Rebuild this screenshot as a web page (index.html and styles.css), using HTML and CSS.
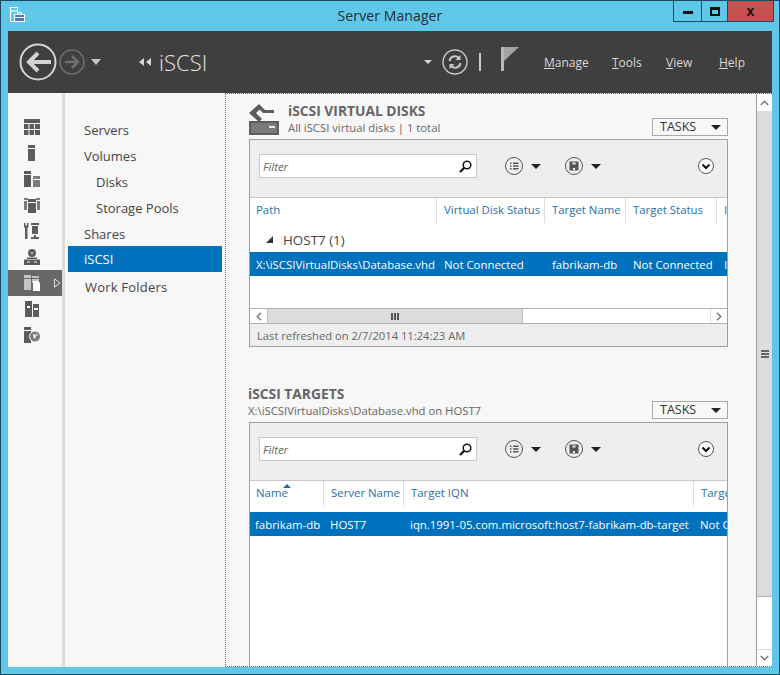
FILE: index.html
```html
<!DOCTYPE html>
<html lang="en">
<head>
  <meta charset="UTF-8" />
  <title>Server Manager</title>
  <link rel="stylesheet" href="styles.css">
</head>
<body>
<div class="window">
  <div class="titlebar">
    <svg class="app-icon" width="18" height="18" viewBox="0 0 18 18" fill="none" stroke="#fff" stroke-width="1">
      <rect x="1.5" y="1.5" width="7" height="14" fill="#5fc8e8"/>
      <path d="M1.5 5h7"/>
      <rect x="5.5" y="8.5" width="10" height="7" fill="#4a7fa8"/>
      <path d="M8.5 8.5v-2h4v2M5.5 11.5h10"/>
    </svg>
    <div class="title">Server Manager</div>
    <div class="controls">
      <div class="ctl ctl-min"><span></span></div>
      <div class="ctl ctl-max"><span></span></div>
      <div class="ctl ctl-close">x</div>
    </div>
  </div>

  <div class="header">
    <svg class="nav-back" width="38" height="38" viewBox="0 0 38 38" fill="none" stroke="#d4d4d4">
      <circle cx="19" cy="19" r="17.5" stroke-width="2"/>
      <path d="M32 19H11" stroke-width="4"/>
      <path d="M19 10l-9 9 9 9" stroke-width="4"/>
    </svg>
    <svg class="nav-forward" width="26" height="26" viewBox="0 0 26 26" fill="none" stroke="#6e6e6e">
      <circle cx="13" cy="13" r="12" stroke-width="1.6"/>
      <path d="M6 13h13M13 7l6 6-6 6" stroke-width="2.6"/>
    </svg>
    <div class="tri-down nav-drop"></div>
    <div class="crumb-arrows"><i></i><i></i></div>
    <div class="crumb">iSCSI</div>
    <div class="tri-small"></div>
    <svg class="refresh" width="26" height="26" viewBox="0 0 26 26" fill="none" stroke="#c8c8c8">
      <circle cx="13" cy="13" r="12" stroke-width="1.4"/>
      <path d="M7.5 12a5.5 5.5 0 0 1 9.5-3M18.500 14a5.500 5.500 0 0 1-9.500 3" stroke-width="2"/>
      <path d="M18.500 6v5h-5zM7.500 20v-5h5z" fill="#c8c8c8" stroke="none"/>
    </svg>
    <div class="sep"></div>
    <svg class="flag" width="18" height="24" viewBox="0 0 18 24">
      <path d="M0 0h3v24H0z" fill="#b8b8b8"/>
      <path d="M3 0h15l-15 14z" fill="#a4a4a4"/>
    </svg>
    <div class="menu">
      <a><u>M</u>anage</a>
      <a><u>T</u>ools</a>
      <a><u>V</u>iew</a>
      <a><u>H</u>elp</a>
    </div>
  </div>

  <div class="body">
    <div class="rail">
      <div class="rail-item">
        <svg width="16" height="16" viewBox="0 0 16 16" fill="#5c5c5c"><path d="M0 0h16v4H0zM0 5h4.500v5H0zM5.500 5h4.500v5H5.500zM11 5h5v5h-5zM0 11h4.500v5H0zM5.500 11h4.500v5H5.500zM11 11h5v5h-5z"/></svg>
      </div>
      <div class="rail-item">
        <svg width="16" height="16" viewBox="0 0 16 16" fill="#5c5c5c"><path d="M4 0h7v3H4zM4 4h7v12H4z"/></svg>
      </div>
      <div class="rail-item">
        <svg width="16" height="16" viewBox="0 0 16 16" fill="#5c5c5c"><path d="M0 0h7v3H0zM0 4h7v12H0z"/><path d="M9 5h7v3H9zM9 9h7v7H9z" fill="#7c7c7c"/></svg>
      </div>
      <div class="rail-item">
        <svg width="16" height="16" viewBox="0 0 16 16" fill="#5c5c5c"><path d="M0 1h4v2H0zM12 1h4v2h-4zM0 4h3v9H0zM13 4h3v9h-3z" fill="#7c7c7c"/><path d="M4 2h8v3H4zM4 6h8v10H4z"/></svg>
      </div>
      <div class="rail-item">
        <svg width="16" height="16" viewBox="0 0 16 16" fill="#5c5c5c"><path d="M0 0l1.500 0v2.500h1.500V0h1.500v4l-1 1v11H1V5L0 4z"/><path d="M7 0h8v2H7zM8 3h6v8H8zM10 12h2v2h3v2H7v-2h3z"/></svg>
      </div>
      <div class="rail-item">
        <svg width="16" height="16" viewBox="0 0 16 16" fill="#5c5c5c"><circle cx="8" cy="4" r="4"/><circle cx="8" cy="4" r="1.500" fill="#9a9a9a"/><path d="M3 8.500h10v1.500H3zM0 10.500h16v5.500H0z"/><path d="M3 12.500h3v1H3zM10 12.500h3v1h-3z" fill="#f7f7f7"/></svg>
      </div>
      <div class="rail-item rail-item-on">
        <svg width="16" height="16" viewBox="0 0 16 16" fill="#c4c4c4"><path d="M0 0h7v3H0zM0 4h7v11H0zM8 1h7v2H8zM8 4h7v4H8z"/><path d="M9 6h5l2 2v8H9z" fill="#fff"/></svg>
        <svg class="rail-arrow" width="7" height="10" viewBox="0 0 7 10" fill="none" stroke="#e4e4e4"><path d="M.5.800L6 5 .5 9.200z"/></svg>
      </div>
      <div class="rail-item">
        <svg width="16" height="16" viewBox="0 0 16 16" fill="#5c5c5c"><path d="M1 0h7v16H1zM9 3h6v13H9z"/><path d="M3 5h3v2H3zM10 7h4v2h-4z" fill="#f7f7f7"/></svg>
      </div>
      <div class="rail-item">
        <svg width="16" height="16" viewBox="0 0 16 16" fill="#5c5c5c"><path d="M0 0h7v3H0zM0 4h7v12H0z"/><circle cx="11" cy="9.500" r="5.500" fill="#7c7c7c" stroke="#f7f7f7"/><path d="M9 7l3 1v2l-2 2zM12 6l2 2-1 1z" fill="#f7f7f7"/></svg>
      </div>
    </div>

    <div class="nav">
      <div class="nav-item">Servers</div>
      <div class="nav-item">Volumes</div>
      <div class="nav-item nav-sub">Disks</div>
      <div class="nav-item nav-sub">Storage Pools</div>
      <div class="nav-item">Shares</div>
      <div class="nav-item nav-on">iSCSI</div>
      <div class="nav-item nav-last">Work Folders</div>
    </div>

    <div class="main">
      <div class="content">

        <div class="section">
          <div class="section-head">
            <svg class="disk-icon" width="32" height="32" viewBox="0 0 32 32" fill="#5c5c5c">
              <path d="M1 18h30v14H1zM3 20v10h26V20z" fill-rule="evenodd"/>
              <path d="M3 20h26v10H3z" fill="#7a7a7a"/>
              <path d="M21 23h6v2h-6z" fill="#e8e8e8"/>
              <path d="M11 1L1 10l10 9 3-3-6-6 3.500-3.500L15 10h11v-3H17z"/>
            </svg>
            <div class="section-text">
              <div class="section-title">iSCSI VIRTUAL DISKS</div>
              <div class="section-sub">All iSCSI virtual disks | 1 total</div>
            </div>
            <div class="tasks">TASKS<span class="tri-down-dark"></span></div>
          </div>

          <div class="panel panel-disks">
            <div class="toolbar">
              <div class="filter"><span>Filter</span>
                <svg width="13" height="13" viewBox="0 0 13 13" fill="none" stroke="#111"><circle cx="8" cy="5" r="3.800" stroke-width="1.500"/><path d="M5.300 7.700L1 12" stroke-width="2.200"/></svg>
              </div>
              <div class="tool tool-list">
                <svg width="18" height="18" viewBox="0 0 18 18" fill="none" stroke="#555"><circle cx="9" cy="9" r="8.500"/><path d="M5 5.500h1.500v1.500H5zM5 8.300h1.500v1.500H5zM5 11h1.500v1.500H5zM8 5.500h5.500v1.500H8zM8 8.300h5.500v1.500H8zM8 11h5.500v1.500H8z" fill="#555" stroke="none"/></svg>
                <span class="tri-down-dark"></span>
              </div>
              <div class="tool tool-save">
                <svg width="18" height="18" viewBox="0 0 18 18" fill="none" stroke="#555"><circle cx="9" cy="9" r="8.500"/><path d="M4.500 4.500h9v9h-9zM7.500 5.500v2h3v-2zM8 11v2h2v-2z" fill="#555" fill-rule="evenodd" stroke="none"/></svg>
                <span class="tri-down-dark"></span>
              </div>
              <svg class="tool-more" width="16" height="16" viewBox="0 0 16 16" fill="#fff" stroke="#555"><circle cx="8" cy="8" r="7.500"/><path d="M4.500 6.500L8 10l3.500-3.500" fill="none" stroke="#111" stroke-width="2"/></svg>
            </div>
            <div class="cols cols-disks thead">
              <div>Path</div><div>Virtual Disk Status</div><div>Target Name</div><div>Target Status</div><div>I</div>
            </div>
            <div class="group"><span class="group-arrow"></span>HOST7 (1)</div>
            <div class="cols cols-disks row-on">
              <div>X:\iSCSIVirtualDisks\Database.vhd</div><div>Not Connected</div><div>fabrikam-db</div><div>Not Connected</div><div>I</div>
            </div>
            <div class="hscroll">
              <div class="hbtn">
                <svg width="6" height="9" viewBox="0 0 6 9" fill="none" stroke="#777" stroke-width="1.400"><path d="M5 .8L1.200 4.500 5 8.200"/></svg>
              </div>
              <div class="hthumb"><i></i><i></i><i></i></div>
              <div class="htrack"></div>
              <div class="hbtn hbtn-end">
                <svg width="6" height="9" viewBox="0 0 6 9" fill="none" stroke="#777" stroke-width="1.400"><path d="M1 .8l3.800 3.700L1 8.200"/></svg>
              </div>
            </div>
            <div class="refreshed">Last refreshed on 2/7/2014 11:24:23 AM</div>
          </div>
        </div>

        <div class="section section-targets">
          <div class="section-head">
            <div class="section-text section-text-plain">
              <div class="section-title">iSCSI TARGETS</div>
              <div class="section-sub">X:\iSCSIVirtualDisks\Database.vhd on HOST7</div>
            </div>
            <div class="tasks">TASKS<span class="tri-down-dark"></span></div>
          </div>

          <div class="panel panel-targets">
            <div class="toolbar">
              <div class="filter"><span>Filter</span>
                <svg width="13" height="13" viewBox="0 0 13 13" fill="none" stroke="#111"><circle cx="8" cy="5" r="3.800" stroke-width="1.500"/><path d="M5.300 7.700L1 12" stroke-width="2.200"/></svg>
              </div>
              <div class="tool tool-list">
                <svg width="18" height="18" viewBox="0 0 18 18" fill="none" stroke="#555"><circle cx="9" cy="9" r="8.500"/><path d="M5 5.500h1.500v1.500H5zM5 8.300h1.500v1.500H5zM5 11h1.500v1.500H5zM8 5.500h5.500v1.500H8zM8 8.300h5.500v1.500H8zM8 11h5.500v1.500H8z" fill="#555" stroke="none"/></svg>
                <span class="tri-down-dark"></span>
              </div>
              <div class="tool tool-save">
                <svg width="18" height="18" viewBox="0 0 18 18" fill="none" stroke="#555"><circle cx="9" cy="9" r="8.500"/><path d="M4.500 4.500h9v9h-9zM7.500 5.500v2h3v-2zM8 11v2h2v-2z" fill="#555" fill-rule="evenodd" stroke="none"/></svg>
                <span class="tri-down-dark"></span>
              </div>
              <svg class="tool-more" width="16" height="16" viewBox="0 0 16 16" fill="#fff" stroke="#555"><circle cx="8" cy="8" r="7.500"/><path d="M4.500 6.500L8 10l3.500-3.500" fill="none" stroke="#111" stroke-width="2"/></svg>
            </div>
            <div class="cols cols-targets thead">
              <div class="sorted">Name</div><div>Server Name</div><div>Target IQN</div><div>Target Status</div>
            </div>
            <div class="cols cols-targets row-on row-targets">
              <div>fabrikam-db</div><div>HOST7</div><div>iqn.1991-05.com.microsoft:host7-fabrikam-db-target</div><div>Not Connected</div>
            </div>
          </div>
        </div>

      </div>

      <div class="vscroll">
        <div class="vbtn">
          <svg width="9" height="6" viewBox="0 0 9 6" fill="none" stroke="#777" stroke-width="1.400"><path d="M.8 5l3.700-3.800L8.200 5"/></svg>
        </div>
        <div class="vthumb"><i></i><i></i><i></i></div>
        <div class="vtrack"></div>
        <div class="vbtn vbtn-end">
          <svg width="9" height="6" viewBox="0 0 9 6" fill="none" stroke="#777" stroke-width="1.400"><path d="M.8 1l3.700 3.800L8.200 1"/></svg>
        </div>
      </div>
    </div>
  </div>
</div>
</body>
</html>
```

FILE: styles.css
```css
* { box-sizing: border-box; }
html, body { margin: 0; height: 100%; }
body {
  font-family: "Open Sans", "Noto Sans", sans-serif;
  font-size: 11.4px;
  color: #4a4a4a;
  overflow: hidden;
}
.window {
  width: 780px;
  height: 675px;
  background: #5fc8e8;
  border: 1px solid #1c4a66;
  padding: 0 7px 7px;
  display: flex;
  flex-direction: column;
}

/* title bar */
.titlebar {
  height: 30px;
  display: grid;
  grid-template-columns: 1fr auto 1fr;
  flex: none;
}
.app-icon { margin: 5px 0 0 1px; }
.title {
  font-size: 14px;
  color: #1f2d36;
  line-height: 30px;
  letter-spacing: 0.1px;
}
.controls {
  justify-self: end;
  display: flex;
  height: 21px;
  margin-right: -2px;
  border: 1px solid #1c4a66;
  border-top: none;
}
.ctl {
  display: flex;
  align-items: center;
  justify-content: center;
  width: 28px;
  border-right: 1px solid #1c4a66;
}
.ctl-max { width: 26px; }
.ctl-min span { width: 10px; height: 3px; background: #111; margin-top: 3px; }
.ctl-max span { width: 10px; height: 9px; border: 2px solid #111; border-top-width: 3px; }
.ctl-close {
  width: 45px;
  border-right: none;
  background: #c75050;
  color: #111;
  font: bold 14px "Liberation Sans", sans-serif;
}

/* dark header */
.header {
  height: 62px;
  background: #3f3f3f;
  display: flex;
  align-items: center;
  flex: none;
  color: #d8d8d8;
}
.nav-back { margin-left: 11px; }
.nav-forward { margin-left: 2px; }
.tri-down {
  width: 0;
  height: 0;
  border: 5px solid transparent;
  border-top: 6px solid #c8c8c8;
  border-bottom: none;
}
.nav-drop { margin-left: 6px; }
.crumb-arrows { display: flex; gap: 2px; margin-left: 38px; }
.crumb-arrows i {
  width: 0;
  height: 0;
  border: 4px solid transparent;
  border-right: 5px solid #d8d8d8;
  border-left: none;
}
.crumb {
  font-size: 22px;
  font-weight: 300;
  color: #e4e4e4;
  margin-left: 8px;
  width: 265px;
}
.tri-small {
  width: 0;
  height: 0;
  border: 4px solid transparent;
  border-top: 4px solid #d8d8d8;
  border-bottom: none;
}
.refresh { margin-left: 10px; }
.sep { width: 2px; height: 18px; background: #c8c8c8; margin-left: 11px; }
.flag { margin-left: 20px; margin-top: -6px; }
.menu { display: flex; margin-left: 25px; font-size: 12px; }
.menu a { display: block; width: 68px; }
.menu a:nth-child(2) { width: 54px; }
.menu a:nth-child(3) { width: 53px; }
.menu a:nth-child(4) { width: 30px; }

/* body columns */
.body {
  flex: 1;
  min-height: 0;
  display: flex;
  background: #f7f7f7;
}
.rail {
  width: 54px;
  padding-top: 21px;
  flex: none;
}
.rail-item {
  height: 26px;
  display: flex;
  align-items: center;
  padding-left: 16px;
}
.rail-item-on { background: #686868; }
.rail-arrow { margin-left: 14px; }
.nav {
  width: 163px;
  flex: none;
  border-left: 3px solid #dcdcdc;
  padding: 24px 3px 0 3px;
}
.nav-item {
  height: 26px;
  line-height: 26px;
  padding-left: 16px;
  font-size: 13px;
  color: #444;
}
.nav-sub { padding-left: 28px; }
.nav-on { background: #0071bc; color: #fff; margin-top: -1px; }
.nav-last { margin-top: 2px; padding-left: 17px; letter-spacing: 0.2px; }

.main {
  flex: 1;
  min-width: 0;
  display: flex;
  border: 1px dotted #666;
  border-right: none;
}
.content {
  flex: 1;
  min-width: 0;
  overflow: hidden;
  padding: 9px 0 0 23px;
}
.section { width: 479px; }
.section-targets { margin-top: 40px; }
.section-head {
  height: 36px;
  display: flex;
  align-items: flex-start;
}
.disk-icon { margin: 0 8px 0 -1px; flex: none; }
.section-text { flex: 1; margin-top: -1px; }
.section-text-plain { margin: -2px 0 0 -1px; }
.section-title {
  font-size: 13.8px;
  font-weight: 700;
  color: #666;
  line-height: 17px;
}
.section-sub {
  font-size: 11.3px;
  color: #666;
  line-height: 18px;
}
.tasks {
  width: 76px;
  height: 18px;
  margin-top: 15px;
  border: 1px solid #a8a8a8;
  background: #f7f7f7;
  line-height: 16px;
  padding: 0 6px 0 7px;
  font-size: 12.5px;
  color: #333;
  display: flex;
  align-items: center;
  justify-content: space-between;
}
.section-targets .section-head { height: 35px; }
.section-targets .tasks { margin-top: 14px; }
.tri-down-dark {
  width: 0;
  height: 0;
  border: 5px solid transparent;
  border-top: 5px solid #222;
  border-bottom: none;
}

/* panels */
.panel {
  border: 1px solid #a0a0a0;
  background: #fff;
}
.panel-disks { height: 208px; display: flex; flex-direction: column; }
.panel-targets { height: 300px; }
.toolbar {
  height: 58px;
  flex: none;
  background: #eeeeee;
  border-bottom: 1px solid #c8c8c8;
  display: flex;
  align-items: center;
  padding: 0 0 5px 9px;
}
.filter {
  width: 218px;
  height: 24px;
  background: #fff;
  border: 1px solid #c8c8c8;
  display: flex;
  align-items: center;
  justify-content: space-between;
  padding: 0 4px 0 3px;
  font-style: italic;
  color: #666;
}
.tool {
  display: flex;
  align-items: center;
  gap: 8px;
}
.tool-list { margin-left: 28px; }
.tool-save { margin-left: 24px; }
.tool-more { margin-left: 97px; }

.cols { display: grid; flex: none; white-space: nowrap; overflow: hidden; }
.cols > div { overflow: hidden; padding-left: 7px; }
.cols > div:first-child { padding-left: 6px; }
.cols-disks { grid-template-columns: 187px 108px 81px 91px 1fr; }
.cols-targets { grid-template-columns: 74px 80px 290px 1fr; }
.thead { height: 25px; line-height: 24px; color: #2a6fa8; }
.thead > div { border-right: 1px solid #dedede; }
.thead > div:last-child { border-right: none; }
.sorted { position: relative; }
.sorted::before {
  content: "";
  position: absolute;
  left: 33px;
  top: 3px;
  border: 4px solid transparent;
  border-bottom: 4px solid #1a6fa8;
  border-top: none;
}
.group {
  height: 29px;
  flex: none;
  line-height: 35px;
  padding-left: 33px;
  font-size: 13.4px;
  color: #444;
  position: relative;
}
.group-arrow {
  width: 0;
  height: 0;
  position: absolute;
  left: 16px;
  top: 13px;
  border-style: solid;
  border-width: 0 0 7px 7px;
  border-color: transparent transparent #333 transparent;
}
.row-on {
  height: 24px;
  line-height: 26px;
  background: #0071bc;
  color: #fff;
}
.row-targets { margin-top: 6px; }
.row-targets > div { padding-left: 6px; }
.row-targets > div:first-child { padding-left: 5px; }

.hscroll {
  margin-top: 32px;
  height: 16px;
  flex: none;
  display: flex;
  border-top: 1px solid #b0b0b0;
  border-bottom: 1px solid #b0b0b0;
}
.hbtn {
  width: 17px;
  display: flex;
  align-items: center;
  justify-content: center;
  background: #fff;
  flex: none;
}
.hbtn-end { border-left: 1px solid #dcdcdc; }
.hthumb {
  width: 256px;
  background: #dcdcdc;
  border-left: 1px solid #c0c0c0;
  border-right: 1px solid #c0c0c0;
  display: flex;
  align-items: center;
  justify-content: center;
  gap: 1px;
}
.hthumb i { width: 2px; height: 7px; background: #555; }
.htrack { flex: 1; background: #fff; }
.refreshed {
  flex: 1;
  min-height: 0;
  overflow: hidden;
  background: #eeeeee;
  line-height: 23px;
  padding-left: 7px;
  font-size: 11.2px;
  color: #666;
}

/* page scrollbar */
.vscroll {
  width: 16px;
  flex: none;
  display: flex;
  flex-direction: column;
  border-left: 1px solid #a0a0a0;
}
.vbtn {
  height: 17px;
  flex: none;
  background: #fff;
  display: flex;
  align-items: center;
  justify-content: center;
}
.vbtn-end { border-top: 1px solid #dcdcdc; }
.vthumb {
  height: 486px;
  flex: none;
  background: #dcdcdc;
  border-bottom: 1px solid #b0b0b0;
  display: flex;
  flex-direction: column;
  align-items: center;
  justify-content: center;
  gap: 1px;
}
.vthumb i { width: 8px; height: 2px; background: #666; }
.vtrack { flex: 1; background: #fff; }
```
